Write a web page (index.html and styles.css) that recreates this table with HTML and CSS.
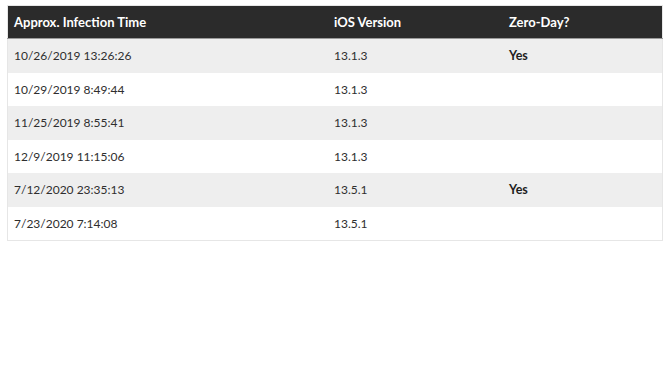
FILE: index.html
```html
<!DOCTYPE html>
<html>
<head>
<meta charset="utf-8">
<link rel="stylesheet" href="styles.css">
</head>
<body>
<table class="data">
  <thead>
    <tr><th class="c1">Approx. Infection Time</th><th class="c2">iOS Version</th><th class="c3">Zero-Day?</th></tr>
  </thead>
  <tbody>
    <tr><td>10/26/2019 13:26:26</td><td>13.1.3</td><td class="yes">Yes</td></tr>
    <tr><td>10/29/2019 8:49:44</td><td>13.1.3</td><td></td></tr>
    <tr><td>11/25/2019 8:55:41</td><td>13.1.3</td><td></td></tr>
    <tr><td>12/9/2019 11:15:06</td><td>13.1.3</td><td></td></tr>
    <tr><td>7/12/2020 23:35:13</td><td>13.5.1</td><td class="yes">Yes</td></tr>
    <tr><td>7/23/2020 7:14:08</td><td>13.5.1</td><td></td></tr>
  </tbody>
</table>
</body>
</html>
```
FILE: styles.css
```css
html, body {
  margin: 0;
  padding: 0;
  background: #ffffff;
}
body {
  padding: 5px 7px;
  font-family: Lato, "Liberation Sans", sans-serif;
  font-size: 12px;
  color: #2e2e2e;
}
.data {
  width: 656px;
  border-collapse: collapse;
  border: 1px solid #e6e6e6;
  table-layout: fixed;
}
.data th {
  background: #2b2b2b;
  color: #ffffff;
  font-size: 13px;
  font-weight: 700;
  text-align: left;
  height: 32px;
  padding: 0 6px;
  border-bottom: 1px solid #9a9a9a;
}
.data .c1 { width: 308px; }
.data .c2 { width: 163px; }
.data td {
  height: 33.5px;
  padding: 0 6px;
  vertical-align: middle;
}
.data tbody tr:nth-child(odd) td {
  background: #eeeeee;
}
.data td.yes {
  font-size: 12.5px;
  font-weight: 700;
  color: #1e1e1e;
}
```
